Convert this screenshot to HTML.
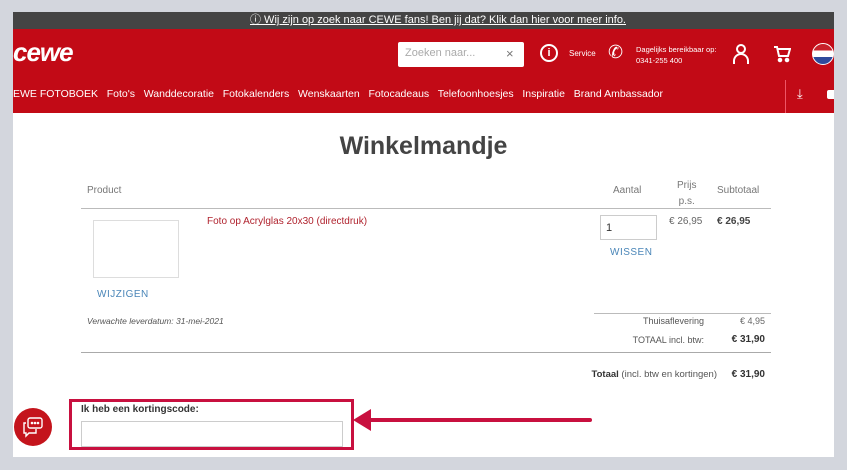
<!DOCTYPE html>
<html><head><meta charset="utf-8"><style>
*{margin:0;padding:0;box-sizing:border-box}
body{width:847px;height:470px;background:#d3d6dd;font-family:"Liberation Sans",sans-serif;position:relative;overflow:hidden}
.a{position:absolute;white-space:nowrap}
</style></head><body>
<div class="a" style="left:13px;top:12px;width:821px;height:445px;background:#fff"></div>
<div class="a" style="left:13px;top:12px;width:821px;height:17px;background:#444"></div>
<div class="a" style="left:250px;top:12px;font-size:11px;color:#fff;line-height:17px;text-decoration:underline">ⓘ Wij zijn op zoek naar CEWE fans! Ben jij dat? Klik dan hier voor meer info.</div>
<div class="a" style="left:13px;top:29px;width:821px;height:84px;background:#c20a16"></div>
<div class="a" style="left:13px;top:37px;font-size:26px;font-weight:bold;color:#fff;font-style:italic;letter-spacing:-1px">cewe</div>
<div class="a" style="left:398px;top:42px;width:126px;height:25px;background:#fff;border-radius:2px"></div>
<div class="a" style="left:405px;top:47px;font-size:11px;color:#aaa">Zoeken naar...</div>
<div class="a" style="left:506px;top:46px;font-size:13px;color:#777">×</div>
<div class="a" style="left:540px;top:44px;width:18px;height:18px;border:2px solid #fff;border-radius:50%;color:#fff;font-size:11px;font-weight:bold;text-align:center;line-height:14px">i</div>
<div class="a" style="left:569px;top:49px;font-size:8px;color:#fff">Service</div>
<div class="a" style="left:608px;top:42px;font-size:18px;color:#fff">✆</div>
<div class="a" style="left:636px;top:44px;font-size:7.5px;color:#fff;line-height:11px">Dagelijks bereikbaar op:<br>0341-255 400</div>
<svg class="a" style="left:732px;top:43px" width="18" height="22" viewBox="0 0 18 22" fill="none" stroke="#fff" stroke-width="2"><circle cx="9" cy="6" r="4"/><path d="M2 21v-3a7 7 0 0 1 14 0v3"/></svg>
<svg class="a" style="left:773px;top:45px" width="18" height="18" viewBox="0 0 18 18" fill="none" stroke="#fff" stroke-width="2"><path d="M1 2h3l2 9h9l2-7H5"/><circle cx="7" cy="15" r="1.3" fill="#fff"/><circle cx="14" cy="15" r="1.3" fill="#fff"/></svg>
<div class="a" style="left:812px;top:43px;width:22px;height:22px;border-radius:50%;overflow:hidden;background:linear-gradient(#c8202a 33%,#fff 33%,#fff 66%,#2f4a9c 66%);border:1px solid #fff"></div>
<div class="a" style="left:13px;top:88px;font-size:10.5px;color:#fff">EWE FOTOBOEK&nbsp;&nbsp; Foto's&nbsp;&nbsp; Wanddecoratie&nbsp;&nbsp; Fotokalenders&nbsp;&nbsp; Wenskaarten&nbsp;&nbsp; Fotocadeaus&nbsp;&nbsp; Telefoonhoesjes&nbsp;&nbsp; Inspiratie&nbsp;&nbsp; Brand Ambassador</div>
<div class="a" style="left:785px;top:80px;width:1px;height:33px;background:#e56"></div>
<div class="a" style="left:797px;top:86px;font-size:13px;color:#fff">⤓</div>
<div class="a" style="left:827px;top:90px;width:7px;height:9px;background:#fff;border-radius:2px 0 0 2px"></div>
<div class="a" style="left:0;top:132px;width:847px;text-align:center;font-size:25px;font-weight:bold;color:#444">Winkelmandje</div>
<div class="a" style="left:87px;top:185px;font-size:10px;color:#777">Product</div>
<div class="a" style="left:613px;top:185px;font-size:10px;color:#777">Aantal</div>
<div class="a" style="left:677px;top:178px;font-size:10px;color:#777;text-align:center;line-height:16px">Prijs<br>p.s.</div>
<div class="a" style="left:717px;top:185px;font-size:10px;color:#777">Subtotaal</div>
<div class="a" style="left:81px;top:208px;width:690px;height:1px;background:#bbb"></div>
<div class="a" style="left:93px;top:220px;width:86px;height:58px;border:1px solid #ddd"></div>
<div class="a" style="left:207px;top:216px;font-size:10px;color:#b0232e">Foto op Acrylglas 20x30 (directdruk)</div>
<div class="a" style="left:600px;top:215px;width:57px;height:25px;border:1px solid #ccc;font-size:11px;padding:6px 5px;color:#333">1</div>
<div class="a" style="left:610px;top:247px;font-size:10px;color:#4a86b8;letter-spacing:.5px">WISSEN</div>
<div class="a" style="left:669px;top:216px;font-size:10px;color:#666">€ 26,95</div>
<div class="a" style="left:717px;top:216px;font-size:10px;color:#444;font-weight:bold">€ 26,95</div>
<div class="a" style="left:97px;top:289px;font-size:10px;color:#4a86b8;letter-spacing:.5px">WIJZIGEN</div>
<div class="a" style="left:87px;top:316px;font-size:8.5px;color:#555;font-style:italic">Verwachte leverdatum: 31-mei-2021</div>
<div class="a" style="left:594px;top:313px;width:177px;height:1px;background:#bbb"></div>
<div class="a" style="left:600px;top:316px;width:104px;text-align:right;font-size:9px;color:#555">Thuisaflevering</div>
<div class="a" style="left:720px;top:316px;width:45px;text-align:right;font-size:9px;color:#666">€ 4,95</div>
<div class="a" style="left:600px;top:335px;width:104px;text-align:right;font-size:9px;color:#555">TOTAAL incl. btw:</div>
<div class="a" style="left:720px;top:334px;width:45px;text-align:right;font-size:10px;color:#333;font-weight:bold">€ 31,90</div>
<div class="a" style="left:81px;top:352px;width:690px;height:1px;background:#aaa"></div>
<div class="a" style="left:540px;top:369px;width:177px;text-align:right;font-size:9.5px;color:#555"><b style="color:#333">Totaal</b> (incl. btw en kortingen)</div>
<div class="a" style="left:720px;top:369px;width:45px;text-align:right;font-size:10px;color:#333;font-weight:bold">€ 31,90</div>
<div class="a" style="left:69px;top:399px;width:285px;height:51px;border:3px solid #c8103f"></div>
<div class="a" style="left:81px;top:404px;font-size:10px;color:#333;font-weight:bold">Ik heb een kortingscode:</div>
<div class="a" style="left:81px;top:421px;width:262px;height:26px;border:1px solid #ccc"></div>
<div class="a" style="left:368px;top:418px;width:224px;height:4px;background:#c8103f;border-radius:2px"></div>
<svg class="a" style="left:353px;top:408px" width="20" height="24"><path d="M0 12 L18 1 L18 23 Z" fill="#c8103f"/></svg>
<div class="a" style="left:14px;top:408px;width:38px;height:38px;border-radius:50%;background:#c4141c"></div>
<svg class="a" style="left:21px;top:415px" width="24" height="24" viewBox="0 0 24 24" fill="none" stroke="#fff" stroke-width="1.4"><rect x="7" y="3" width="14" height="10" rx="2"/><path d="M5 8H3v10h2v3l3-3h7v-4"/><circle cx="11" cy="8" r=".6" fill="#fff"/><circle cx="14" cy="8" r=".6" fill="#fff"/><circle cx="17" cy="8" r=".6" fill="#fff"/></svg>
</body></html>
